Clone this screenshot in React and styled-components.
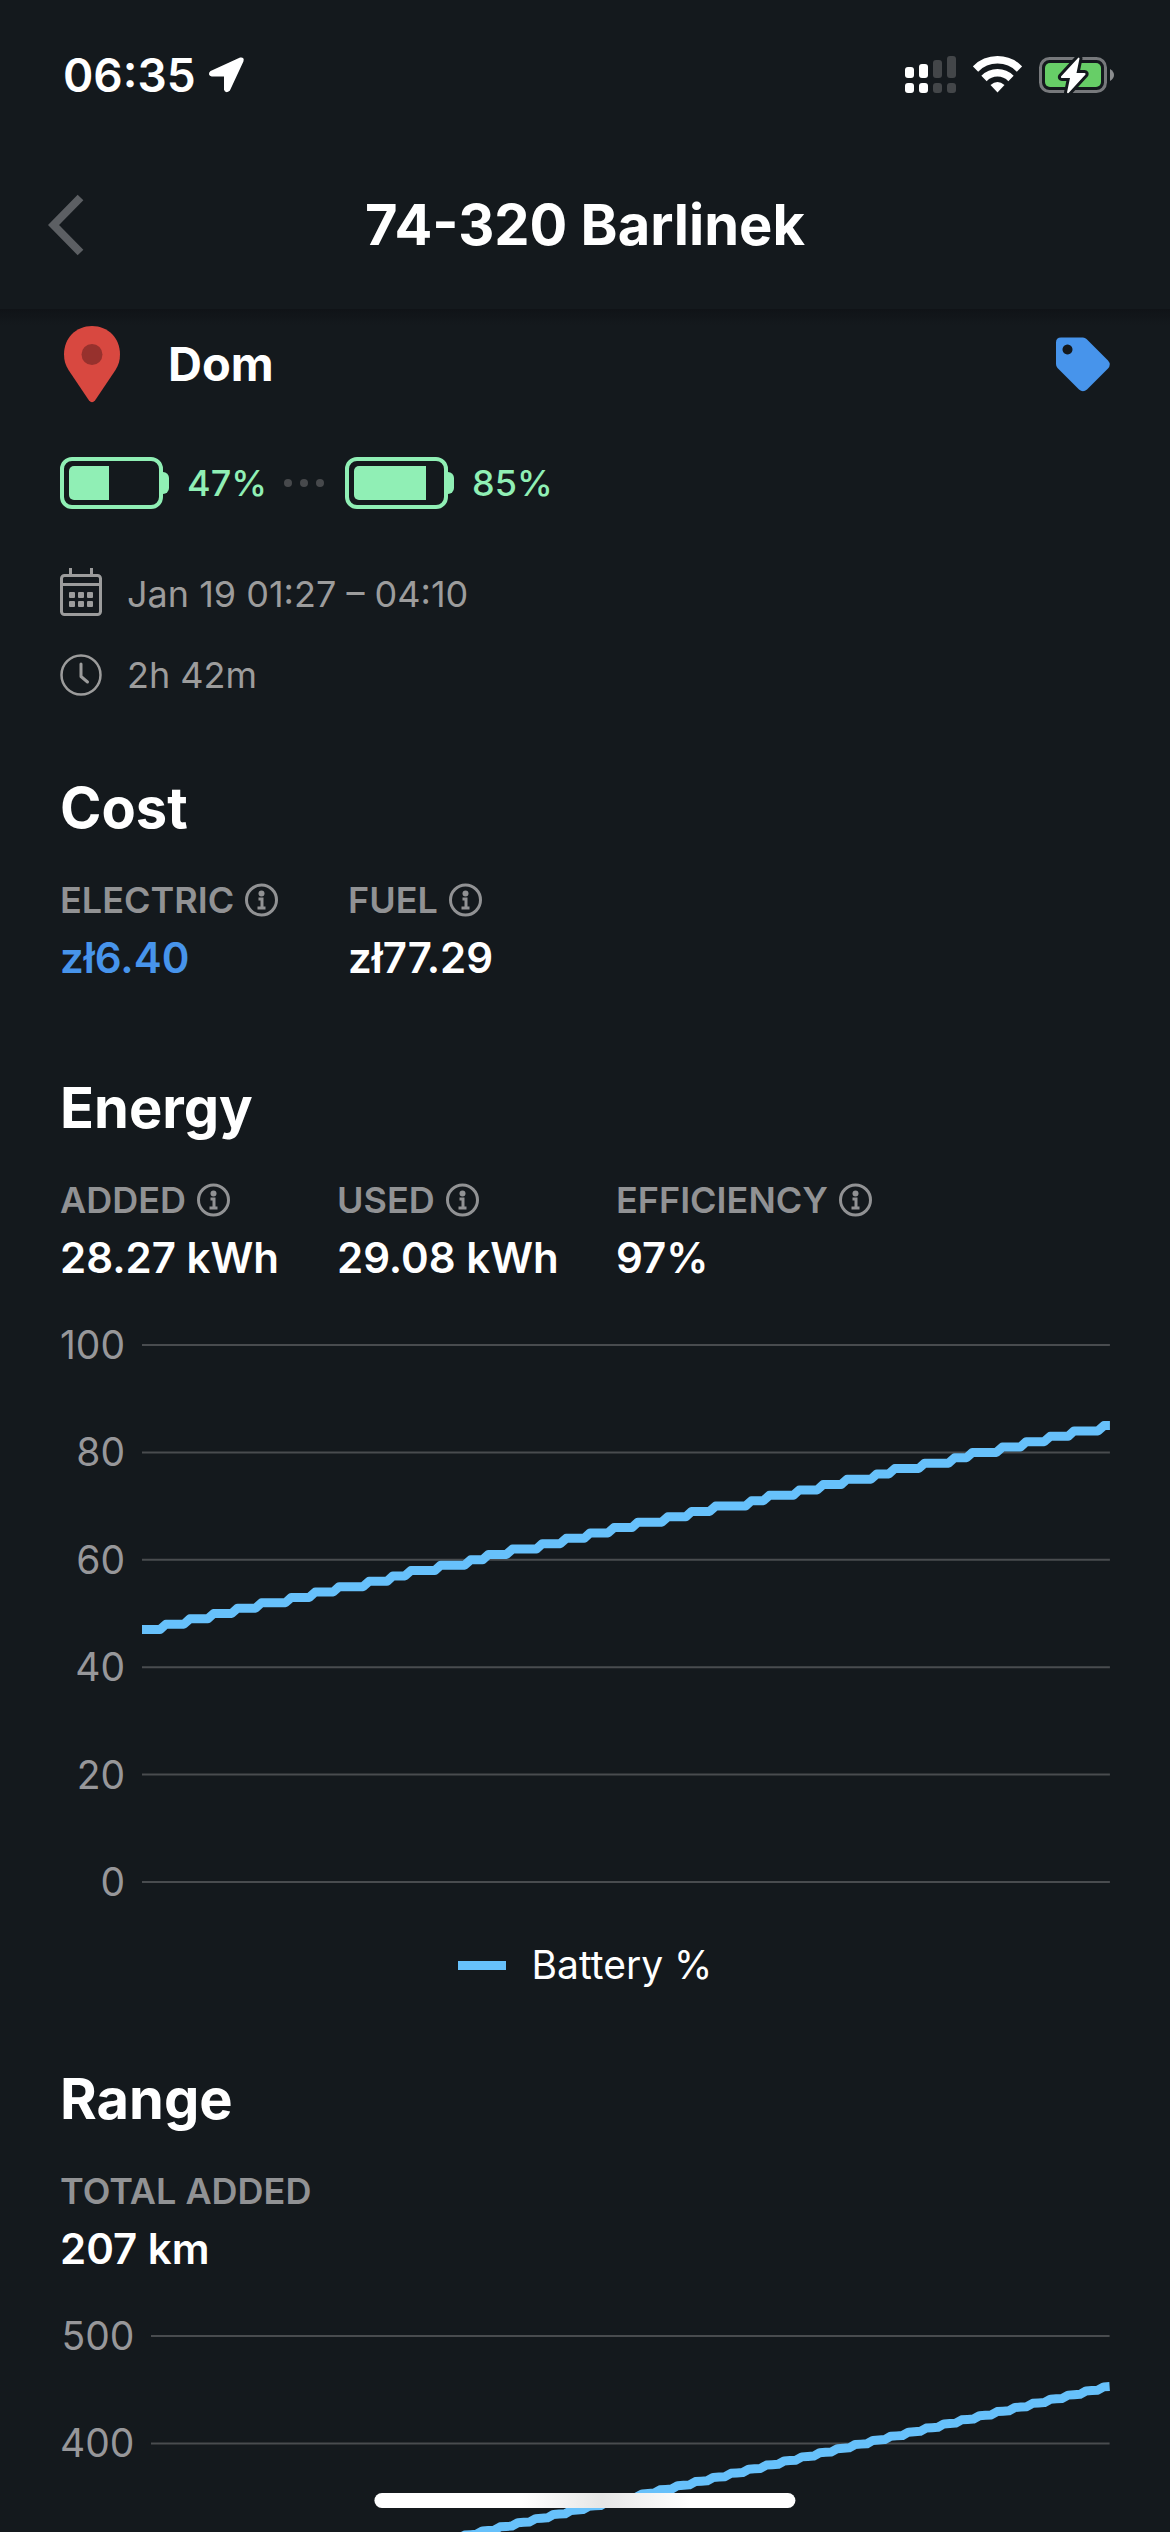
import React from "react";
import styled, { createGlobalStyle } from "styled-components";

const GlobalStyle = createGlobalStyle`
  * {
    box-sizing: border-box;
  }

  body {
    margin: 0;
    background: #14191d;
    color: #fff;
    font-family: Inter, "Liberation Sans", sans-serif;
  }
`;

const Screen = styled.div`
  position: relative;
  display: flex;
  flex-direction: column;
  height: 100vh;
  overflow: hidden;
  background: #14191d;
`;

const StatusBar = styled.div`
  display: flex;
  flex: none;
  align-items: center;
  justify-content: space-between;
  height: 149px;
  padding: 0 55px 0 63px;
`;

const StatusGroup = styled.div`
  display: flex;
  align-items: center;
  gap: ${(props) => props.$gap}px;
`;

const Time = styled.span`
  font-size: 46px;
  font-weight: 600;
  line-height: 52px;
`;

const Header = styled.header`
  display: grid;
  flex: none;
  grid-template-columns: 120px 1fr 120px;
  align-items: center;
  height: 160px;
  padding-bottom: 8px;
`;

const Title = styled.h1`
  margin: 0;
  font-size: 56px;
  font-weight: 700;
  line-height: 68px;
  text-align: center;
`;

const IconButton = styled.button`
  display: flex;
  margin: 0;
  padding: ${(props) => props.$padding || "0"};
  border: none;
  background: none;
  color: ${(props) => props.$color};
  cursor: pointer;
`;

const Content = styled.main`
  flex: 1;
  min-height: 0;
  padding: 15px 60px 0;
  overflow: hidden;
  background: linear-gradient(#101317, #14191d 16px);
`;

const Place = styled.div`
  display: flex;
  align-items: center;
  height: 80px;
`;

const PlaceName = styled.h2`
  flex: 1;
  margin: 0 0 0 45px;
  font-size: 47px;
  font-weight: 700;
  line-height: 56px;
`;

const ChargeRow = styled.div`
  display: flex;
  align-items: center;
  height: 52px;
  margin-top: 53px;
  color: #90efb5;
`;

const Battery = styled.div`
  position: relative;
  width: 103px;
  height: 52px;
  padding: 5px;
  border: 4px solid #90efb5;
  border-radius: 12px;

  &::after {
    position: absolute;
    top: 11px;
    right: -10px;
    width: 6px;
    height: 22px;
    border-radius: 0 6px 6px 0;
    background: #90efb5;
    content: "";
  }
`;

const BatteryLevel = styled.div`
  height: 100%;
  border-radius: 5px 0 0 5px;
  background: #90efb5;
`;

const Percent = styled.span`
  width: 97px;
  margin-left: 24px;
  font-size: 36px;
  font-weight: 500;
  line-height: 44px;
`;

const Dots = styled.div`
  display: flex;
  gap: 8px;
  margin-right: 21px;

  i {
    width: 8px;
    height: 8px;
    border-radius: 50%;
    background: #47494c;
  }
`;

const Details = styled.div`
  display: grid;
  gap: 33px;
  margin-top: 61px;
`;

const Detail = styled.div`
  display: flex;
  align-items: center;
  gap: 24px;
  height: 48px;
  color: #9c9c9c;
  font-size: 36px;
  line-height: 44px;
`;

const Section = styled.section`
  margin-top: ${(props) => props.$space}px;
`;

const SectionTitle = styled.h2`
  margin: 0 0 36px;
  font-size: 56px;
  font-weight: 700;
  line-height: 68px;
`;

const Stats = styled.dl`
  display: grid;
  grid-template-columns: ${(props) => props.$columns};
  margin: 0;
`;

const StatLabel = styled.dt`
  display: flex;
  align-items: center;
  gap: 11px;
  margin-bottom: 10px;
  color: #919294;
  font-size: 36px;
  font-weight: 600;
  line-height: 44px;
`;

const StatValue = styled.dd`
  margin: 0;
  color: ${(props) => (props.$linked ? "#4794eb" : "#fff")};
  font-size: 42px;
  font-weight: 600;
  line-height: 52px;
`;

const ChartBox = styled.div`
  display: flex;
  gap: 17px;
  height: 587px;
  margin-top: 36px;
`;

const Axis = styled.div`
  display: flex;
  flex: none;
  flex-direction: column;
  justify-content: space-between;
  color: #97979a;
  font-size: 39px;
  line-height: 50px;
  text-align: right;
`;

const Plot = styled.svg`
  flex: 1;
  min-width: 0;
  height: 537px;
  margin: 25px 50px 0 0;
  margin-right: 0;
  overflow: visible;

  line,
  polyline {
    fill: none;
    vector-effect: non-scaling-stroke;
  }
`;

const Legend = styled.div`
  display: flex;
  align-items: center;
  justify-content: center;
  gap: 26px;
  margin-top: 33px;
  font-size: 39px;
  line-height: 50px;
`;

const Swatch = styled.span`
  width: 48px;
  height: 9px;
  background: #67c1fb;
`;

const HomeIndicator = styled.div`
  position: absolute;
  bottom: 24px;
  left: 50%;
  width: 36%;
  height: 15px;
  border-radius: 8px;
  background: linear-gradient(90deg, #fff 35%, #e6e6e6 54%, #fff 75%);
  transform: translateX(-50%);
`;

const MINUTES = 162;

// minutes after which the charge level goes up by one percent
const levelUps = [
  3, 7, 11, 15, 19, 24, 28, 32, 37, 41, 44, 49, 54, 57, 61, 66, 70, 74, 78, 82,
  87, 91, 95, 101, 104, 109, 113, 117, 122, 125, 130, 135, 138, 143, 147, 151,
  155, 160,
];

const batteryData = Array.from(
  { length: MINUTES + 1 },
  (_, minute) => 47 + levelUps.filter((m) => m < minute).length
);

const rangeData = Array.from(
  { length: MINUTES + 1 },
  (_, minute) => 246 + (207 * minute) / MINUTES + [0, -0.9, 0.9][minute % 3]
);

const LocationArrow = () => (
  <svg width="37" height="37" viewBox="0 0 37 37" aria-hidden="true">
    <path
      d="M3 16 32.500 2.500Q35.500 2 34.500 5L21 34Q18 36.500 17 33.500V19.500H4Q.5 18.500 3 16Z"
      fill="#fff"
      stroke="#fff"
      strokeWidth="2"
      strokeLinejoin="round"
    />
  </svg>
);

const Signal = () => (
  <svg width="51" height="38" viewBox="0 0 51 38" aria-hidden="true">
    {[11, 14, 18, 22].map((height, i) => (
      <g key={height} fill={i < 2 ? "#fff" : "#434649"}>
        <rect x={i * 14} y={22 - height} width="9" height={height} rx="3" />
        <rect x={i * 14} y="27" width="9" height="10" rx="3" />
      </g>
    ))}
  </svg>
);

const Wifi = () => (
  <svg width="49" height="37" viewBox="0 0 49 37" aria-hidden="true">
    <g fill="none" stroke="#fff" strokeWidth="7.500">
      <path d="M2.500 13A31 31 0 0 1 46.500 13" />
      <path d="M11 22.500A19 19 0 0 1 38 22.500" />
    </g>
    <path d="M17.500 29Q24.500 23 31.500 29L24.500 36.500Z" fill="#fff" />
  </svg>
);

const PhoneBattery = () => (
  <svg width="76" height="38" viewBox="0 0 76 38" aria-hidden="true">
    <rect x="1.500" y="2.500" width="65" height="33" rx="9" fill="none" stroke="#77797c" strokeWidth="3" />
    <rect x="6" y="7" width="56" height="24" rx="5" fill="#67ce67" />
    <path d="M71 13Q75 15.500 75 19T71 25Z" fill="#8b8d8f" />
    <path
      d="M39 2 22 20.500Q21.500 22 23 22H31L28 36.500Q29 38 30 36.500L46.500 18.500Q47 17 45.500 17H37.500L40.500 2.500Q40 1 39 2Z"
      fill="#fff"
      stroke="#14191d"
      strokeWidth="6"
      paintOrder="stroke"
      strokeLinejoin="round"
    />
  </svg>
);

const BackIcon = () => (
  <svg width="36" height="62" viewBox="0 0 36 62" aria-hidden="true">
    <path d="M32.500 3.500 5.500 31 32.500 58.500" fill="none" stroke="#5c5f63" strokeWidth="8" />
  </svg>
);

const Pin = () => (
  <svg width="63" height="78" viewBox="0 0 63 78" aria-hidden="true">
    <path
      d="M32 1C16 1 4 13 4 29.500c0 6 1.500 10.500 4.500 15.500L29 75.500q3 3.500 6 0L55.500 45c3-5 4.500-9.500 4.500-15.500C60 13 48 1 32 1Z"
      fill="#d84840"
    />
    <circle cx="32" cy="29.500" r="10.500" fill="#97312d" />
  </svg>
);

const Tag = () => (
  <svg width="54" height="55" viewBox="0 0 54 55" aria-hidden="true">
    <path
      fillRule="evenodd"
      d="M5 .5H27q2 0 3.500 1.500L52 23.500q3.500 4 0 8L31 52.500q-4 3.500-8 0L1.500 31Q0 29.500 0 27V5.500Q0 .5 5 .5ZM11.500 7.500a5 5 0 1 0 .01 0Z"
      fill="currentColor"
    />
  </svg>
);

const Calendar = () => (
  <svg width="43" height="52" viewBox="0 0 43 52" aria-hidden="true">
    <g fill="none" stroke="#9c9c9c" strokeWidth="3">
      <rect x="1.500" y="7.500" width="39" height="39" rx="3" />
      <path d="M1.500 16.500H40.500M10.500 0V7M31.500 0V7" />
    </g>
    <g fill="#9c9c9c">
      {[9, 18, 27].map((x) => (
        <React.Fragment key={x}>
          <rect x={x} y="24" width="6" height="6" rx="1" />
          <rect x={x} y="33" width="6" height="6" rx="1" />
        </React.Fragment>
      ))}
    </g>
  </svg>
);

const Clock = () => (
  <svg width="43" height="42" viewBox="0 0 43 42" aria-hidden="true">
    <g fill="none" stroke="#9c9c9c" strokeLinecap="round" strokeLinejoin="round">
      <circle cx="21" cy="21" r="19.500" strokeWidth="2.500" />
      <path d="M21 10V22.500L27.500 28" strokeWidth="3" />
    </g>
  </svg>
);

const InfoIcon = () => (
  <svg width="33" height="34" viewBox="0 0 33 34" aria-hidden="true">
    <circle cx="16.500" cy="17" r="15" fill="none" stroke="currentColor" strokeWidth="3" />
    <circle cx="16.500" cy="10.500" r="3" fill="currentColor" />
    <path d="M13.500 16H17V24.500M12.500 25H20.500" fill="none" stroke="currentColor" strokeWidth="3" />
  </svg>
);

function Stat({ label, value, info, linked }) {
  return (
    <div>
      <StatLabel>
        {label}
        {info && (
          <IconButton type="button" $color="#919294" aria-label={`About ${label}`}>
            <InfoIcon />
          </IconButton>
        )}
      </StatLabel>
      <StatValue $linked={linked}>{value}</StatValue>
    </div>
  );
}

function BatteryCharge({ level }) {
  return (
    <>
      <Battery>
        <BatteryLevel style={{ width: `${level}%` }} />
      </Battery>
      <Percent>{level}%</Percent>
    </>
  );
}

function Chart({ ticks, data, label }) {
  const max = ticks[0];
  const points = data.map((value, i) => `${i},${max - value}`).join(" ");

  return (
    <ChartBox>
      <Axis>
        {ticks.map((tick) => (
          <span key={tick}>{tick}</span>
        ))}
      </Axis>
      <Plot
        viewBox={`0 0 ${data.length - 1} ${max}`}
        preserveAspectRatio="none"
        role="img"
        aria-label={label}
      >
        {ticks.map((tick) => (
          <line
            key={tick}
            x1="0"
            x2={data.length - 1}
            y1={max - tick}
            y2={max - tick}
            stroke="#494c4f"
            strokeWidth="2"
          />
        ))}
        <polyline points={points} stroke="#67c1fb" strokeWidth="9" strokeLinejoin="round" />
      </Plot>
    </ChartBox>
  );
}

function App() {
  return (
    <>
      <GlobalStyle />
      <Screen>
        <StatusBar>
          <StatusGroup $gap={12}>
            <Time>06:35</Time>
            <LocationArrow />
          </StatusGroup>
          <StatusGroup $gap={17}>
            <Signal />
            <Wifi />
            <PhoneBattery />
          </StatusGroup>
        </StatusBar>
        <Header>
          <IconButton type="button" $padding="0 36px 0 48px" aria-label="Back">
            <BackIcon />
          </IconButton>
          <Title>74-320 Barlinek</Title>
        </Header>
        <Content>
          <Place>
            <Pin />
            <PlaceName>Dom</PlaceName>
            <IconButton type="button" $color="#4794eb" aria-label="Edit tag">
              <Tag />
            </IconButton>
          </Place>
          <ChargeRow>
            <BatteryCharge level={47} />
            <Dots>
              <i />
              <i />
              <i />
            </Dots>
            <BatteryCharge level={85} />
          </ChargeRow>
          <Details>
            <Detail>
              <Calendar />
              <span>Jan 19 01:27 – 04:10</span>
            </Detail>
            <Detail>
              <Clock />
              <span>2h 42m</span>
            </Detail>
          </Details>
          <Section $space={75}>
            <SectionTitle>Cost</SectionTitle>
            <Stats $columns="288px 1fr">
              <Stat label="ELECTRIC" value="zł6.40" info linked />
              <Stat label="FUEL" value="zł77.29" info />
            </Stats>
          </Section>
          <Section $space={90}>
            <SectionTitle>Energy</SectionTitle>
            <Stats $columns="277px 279px 1fr">
              <Stat label="ADDED" value="28.27 kWh" info />
              <Stat label="USED" value="29.08 kWh" info />
              <Stat label="EFFICIENCY" value="97%" info />
            </Stats>
            <Chart ticks={[100, 80, 60, 40, 20, 0]} data={batteryData} label="Battery level" />
            <Legend>
              <Swatch />
              Battery %
            </Legend>
          </Section>
          <Section $space={75}>
            <SectionTitle>Range</SectionTitle>
            <Stats $columns="1fr">
              <Stat label="TOTAL ADDED" value="207 km" />
            </Stats>
            <Chart ticks={[500, 400, 300, 200, 100, 0]} data={rangeData} label="Range" />
          </Section>
        </Content>
        <HomeIndicator />
      </Screen>
    </>
  );
}

export default App;
